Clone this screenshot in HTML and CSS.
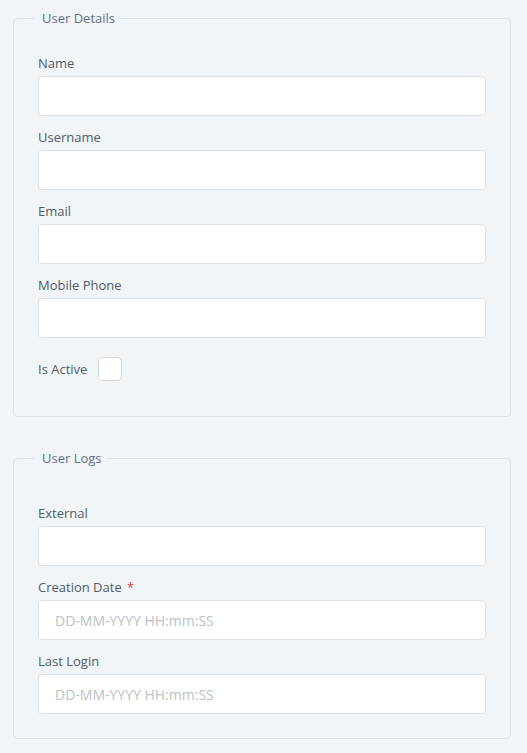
FILE: index.html
```html
<!DOCTYPE html>
<html lang="en">
<head>
<meta charset="utf-8">
<title>User</title>
<link rel="stylesheet" href="styles.css">
</head>
<body>
<form class="page">
  <fieldset class="panel">
    <legend class="panel-title">User Details</legend>
    <div class="field">
      <label class="field-label">Name</label>
      <input class="text-input" type="text">
    </div>
    <div class="field">
      <label class="field-label">Username</label>
      <input class="text-input" type="text">
    </div>
    <div class="field">
      <label class="field-label">Email</label>
      <input class="text-input" type="text">
    </div>
    <div class="field">
      <label class="field-label">Mobile Phone</label>
      <input class="text-input" type="text">
    </div>
    <div class="check-row">
      <label class="field-label inline">Is Active</label>
      <span class="checkbox"></span>
    </div>
  </fieldset>

  <fieldset class="panel panel-logs">
    <legend class="panel-title">User Logs</legend>
    <div class="field">
      <label class="field-label">External</label>
      <input class="text-input" type="text">
    </div>
    <div class="field">
      <label class="field-label">Creation Date <span class="req">*</span></label>
      <input class="text-input" type="text" placeholder="DD-MM-YYYY HH:mm:SS">
    </div>
    <div class="field">
      <label class="field-label">Last Login</label>
      <input class="text-input" type="text" placeholder="DD-MM-YYYY HH:mm:SS">
    </div>
  </fieldset>
</form>
</body>
</html>
```

FILE: styles.css
```css
html, body {
  margin: 0;
  padding: 0;
  background: #f1f5f8;
}
body {
  font-family: "Open Sans", "Noto Sans", sans-serif;
  font-size: 13px;
  color: #5b6670;
}
.page {
  padding: 8px 16px 0 13px;
  display: flex;
  flex-direction: column;
}
.panel {
  margin: 0;
  border: 1px solid #dde2e7;
  border-radius: 4px;
  padding: 25px 24px 16px 24px;
  min-width: 0;
}
.panel-logs {
  margin-top: 31px;
  padding-top: 35px;
  padding-bottom: 13px;
}
.panel-title {
  line-height: 20px;
  padding: 0 4px 0 8px;
  margin-left: -4px;
  color: #647282;
  font-size: 13px;
}
.field {
  display: flex;
  flex-direction: column;
  margin-bottom: 11px;
}
.field-label {
  line-height: 20px;
  margin-bottom: 3px;
  color: #515c66;
}
.field-label.inline {
  margin-bottom: 0;
}
.req {
  color: #e0403a;
  margin-left: 2px;
}
.text-input {
  box-sizing: border-box;
  height: 40px;
  width: 100%;
  border: 1px solid #dde2e7;
  border-radius: 4px;
  background: #ffffff;
  padding: 0 16px;
  font-family: inherit;
  font-size: 14px;
  color: #444;
  outline: none;
}
.text-input::placeholder {
  color: #bcc1c6;
}
.check-row {
  display: flex;
  align-items: center;
  gap: 11px;
  height: 40px;
  margin-bottom: 11px;
}
.checkbox {
  box-sizing: border-box;
  width: 24px;
  height: 24px;
  border: 1px solid #d3d8dd;
  border-radius: 5px;
  background: #ffffff;
}
```
